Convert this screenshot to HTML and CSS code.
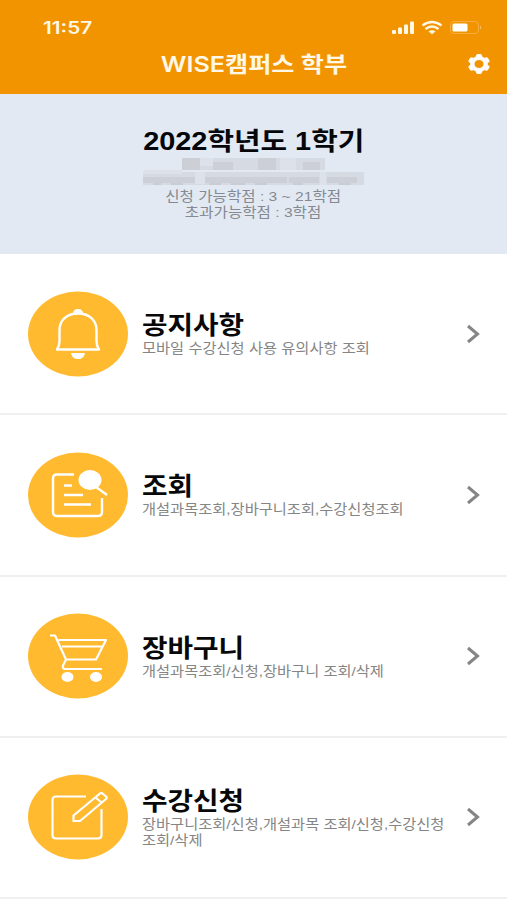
FILE: index.html
```html
<!DOCTYPE html>
<html lang="ko">
<head>
<meta charset="utf-8">
<title>WISE캠퍼스 학부</title>
<link rel="stylesheet" href="styles.css">
</head>
<body>
<header class="top">
  <div class="status">
    <span class="time">11:57</span>
    <svg class="status-icons" width="92" height="16" viewBox="0 0 92 16">
      <g fill="#fff8e6">
        <rect x="1" y="10" width="4" height="4" rx="1"/><rect x="7" y="7.500" width="4" height="6.500" rx="1"/><rect x="13" y="4.500" width="4" height="9.500" rx="1"/><rect x="19" y="1.500" width="4" height="12.500" rx="1"/>
        <path d="M37.500 11.500Q41 8.800 44.500 11.500L41 14.300Z"/>
      </g>
      <path d="M31.500 5.500Q41-1.500 50.500 5.500M34.500 9Q41 4 47.500 9" fill="none" stroke="#fff8e6" stroke-width="2.300"/>
      <rect x="59.500" y="1.500" width="28" height="12" rx="3.500" fill="none" stroke="#f7ae3c"/>
      <rect x="61.500" y="3.500" width="15" height="8" rx="1.500" fill="#fff"/>
      <path d="M89 5.500q2.500 2 0 4z" fill="#f8bd60"/>
    </svg>
  </div>
  <div class="bar">
    <h1 class="title">WISE캠퍼스 학부</h1>
    <svg class="gear" width="24" height="22" viewBox="0 0 24 22">
      <path d="M10 1.500h4l1.200 2.700 2 1 3.100-.4 2 3.300-2 2.200v1.400l2 2.200-2 3.300-3.100-.4-2 1L14 20.500h-4l-1.200-2.700-2-1-3.100.4-2-3.300 2-2.200v-1.400l-2-2.200 2-3.300 3.100.4 2-1zM12 6.500a5 4.500 0 1 0 0 9a5 4.500 0 1 0 0-9z" fill="#fff" stroke="#fff" stroke-width="1" stroke-linejoin="round" fill-rule="evenodd"/>
    </svg>
  </div>
</header>
<section class="term">
  <h2 class="term-title">2022학년도 1학기</h2>
  <svg class="mosaic" width="222" height="30" viewBox="0 0 222 30" shape-rendering="crispEdges">
    <path d="M39 1h143v12H39zM0 15h184v13H0zM184 15h37v13h-37z" fill="#d6dae2"/>
    <path d="M39 1h18v12H39zM70 5h20v8H70zM115 1h18v12h-18zM160 5h17v8h-17zM0 20h52v6H0zM62 20h82v6H62zM146 20h30v6h-30zM184 20h30v6h-30z" fill="#cccfd6"/>
    <path d="M57 1h13v8H57zM137 1h16v12h-16zM52 15h10v12H52zM0 13h39v4H0zM177 15h6v13h-6z" fill="#dde2ea"/>
    <path d="M10 26h8v2h-8zM28 26h12v2H28zM66 26h12v2H66zM88 26h14v2H88zM112 26h12v2h-12zM150 26h10v2h-10zM196 26h12v2h-12z" fill="#c9ccd3"/>
  </svg>
  <p class="term-line">신청 가능학점 : 3 ~ 21학점</p>
  <p class="term-line">초과가능학점 : 3학점</p>
</section>
<main class="menu">
  <a class="item">
    <svg class="icon" width="100" height="86" viewBox="0 0 100 86">
      <ellipse cx="50" cy="43" rx="50" ry="42.500" fill="#ffba2f"/>
      <path d="M50 22.500C38 22.500 31.500 30 31.500 39V50Q31.500 55 29 58.500H71Q68.500 55 68.500 50V39C68.500 30 62 22.500 50 22.500Z" fill="none" stroke="#fff" stroke-width="2.400" stroke-linejoin="round"/>
      <path d="M45 23q0-5 5-5t5 5zM43 62h14q-1 6-7 6t-7-6z" fill="#fff"/>
    </svg>
    <div class="text"><h3 class="name">공지사항</h3><p class="desc">모바일 수강신청 사용 유의사항 조회</p></div>
    <svg class="chevron" width="14" height="20" viewBox="0 0 14 20"><path d="M2 2L11.500 10L2 18"/></svg>
  </a>
  <a class="item">
    <svg class="icon" width="100" height="86" viewBox="0 0 100 86">
      <ellipse cx="50" cy="43" rx="50" ry="42.500" fill="#ffba2f"/>
      <path d="M46 22.500H29Q25 22.500 25 26.500V60Q25 64 29 64H70Q74 64 74 60V46M36 33.500H44M36 43H55M36 52.500H63M68 35L79 43" fill="none" stroke="#fff" stroke-width="2.400"/>
      <ellipse cx="62" cy="28" rx="11.500" ry="10" fill="#fff"/>
    </svg>
    <div class="text"><h3 class="name">조회</h3><p class="desc">개설과목조회,장바구니조회,수강신청조회</p></div>
    <svg class="chevron" width="14" height="20" viewBox="0 0 14 20"><path d="M2 2L11.500 10L2 18"/></svg>
  </a>
  <a class="item">
    <svg class="icon" width="100" height="86" viewBox="0 0 100 86">
      <ellipse cx="50" cy="43" rx="50" ry="42.500" fill="#ffba2f"/>
      <path d="M22 22.500H27L38 46.500L35 52.500Q34 56 37.500 56H74M30.500 27H78L68 46.500H38M34 33.500H74" fill="none" stroke="#fff" stroke-width="2.200" stroke-linejoin="round"/>
      <ellipse cx="39.500" cy="64" rx="6" ry="5" fill="#fff"/><ellipse cx="68" cy="64" rx="6" ry="5" fill="#fff"/>
    </svg>
    <div class="text"><h3 class="name">장바구니</h3><p class="desc">개설과목조회/신청,장바구니 조회/삭제</p></div>
    <svg class="chevron" width="14" height="20" viewBox="0 0 14 20"><path d="M2 2L11.500 10L2 18"/></svg>
  </a>
  <a class="item">
    <svg class="icon" width="100" height="86" viewBox="0 0 100 86">
      <ellipse cx="50" cy="43" rx="50" ry="42.500" fill="#ffba2f"/>
      <path d="M58 22.500H28Q24.500 22.500 24.500 26V61Q24.500 64.500 28 64.500H70Q73.500 64.500 73.500 61V35M72 19.500L45.500 41.500V47H52L78 25Q79.500 23.500 78 22.500L74.500 19.500Q73 18.500 72 19.500ZM67.500 23.500L73.500 28.500" fill="none" stroke="#fff" stroke-width="2.200" stroke-linejoin="round"/>
    </svg>
    <div class="text"><h3 class="name">수강신청</h3><p class="desc">장바구니조회/신청,개설과목 조회/신청,수강신청<br>조회/삭제</p></div>
    <svg class="chevron" width="14" height="20" viewBox="0 0 14 20"><path d="M2 2L11.500 10L2 18"/></svg>
  </a>
</main>
</body>
</html>
```

FILE: styles.css
```css
* { box-sizing: border-box; margin: 0; padding: 0; }
body {
  width: 507px;
  height: 900px;
  overflow: hidden;
  background: #fff;
  font-family: "Liberation Sans", "Noto Sans CJK KR", sans-serif;
}
svg { display: block; flex: none; }
.top { height: 94px; background: #f29400; color: #fff8e6; }
.status {
  height: 44px;
  padding: 12px 24px 0 43px;
  display: flex;
  justify-content: space-between;
  align-items: center;
}
.time {
  font: 600 17px/20px Inter, sans-serif;
  transform: scaleX(1.22);
  transform-origin: left;
}
.bar {
  height: 39px;
  padding: 0 16px 0 41px;
  display: flex;
  align-items: center;
}
.title {
  flex: 1;
  text-align: center;
  font: 600 21.500px/32px Inter, "Noto Sans CJK KR", sans-serif;
  transform: scaleX(1.17);
}
.term {
  height: 160px;
  padding-top: 31px;
  background: #e2e9f3;
  display: flex;
  flex-direction: column;
  align-items: center;
}
.term-title {
  font-size: 25px;
  line-height: 32px;
  color: #05070b;
  transform: scaleX(1.155);
}
.mosaic { margin-bottom: 2px; }
.term-line {
  font-size: 13.500px;
  line-height: 16px;
  color: #858991;
  transform: scaleX(1.155);
}
.menu { display: flex; flex-direction: column; }
.item {
  height: 161.250px;
  padding: 0 27px 0 28px;
  border-bottom: 2px solid #f0f0f0;
  display: flex;
  align-items: center;
}
.text { flex: 1; margin-left: 14px; white-space: nowrap; }
.name {
  font-size: 25px;
  line-height: 30px;
  color: #080808;
  transform: scaleX(1.11);
  transform-origin: left;
}
.desc {
  padding-top: 1px;
  font-size: 13.500px;
  line-height: 16px;
  color: #858585;
  transform: scaleX(1.132);
  transform-origin: left;
}
.chevron path { fill: none; stroke: #858585; stroke-width: 3; }
```
